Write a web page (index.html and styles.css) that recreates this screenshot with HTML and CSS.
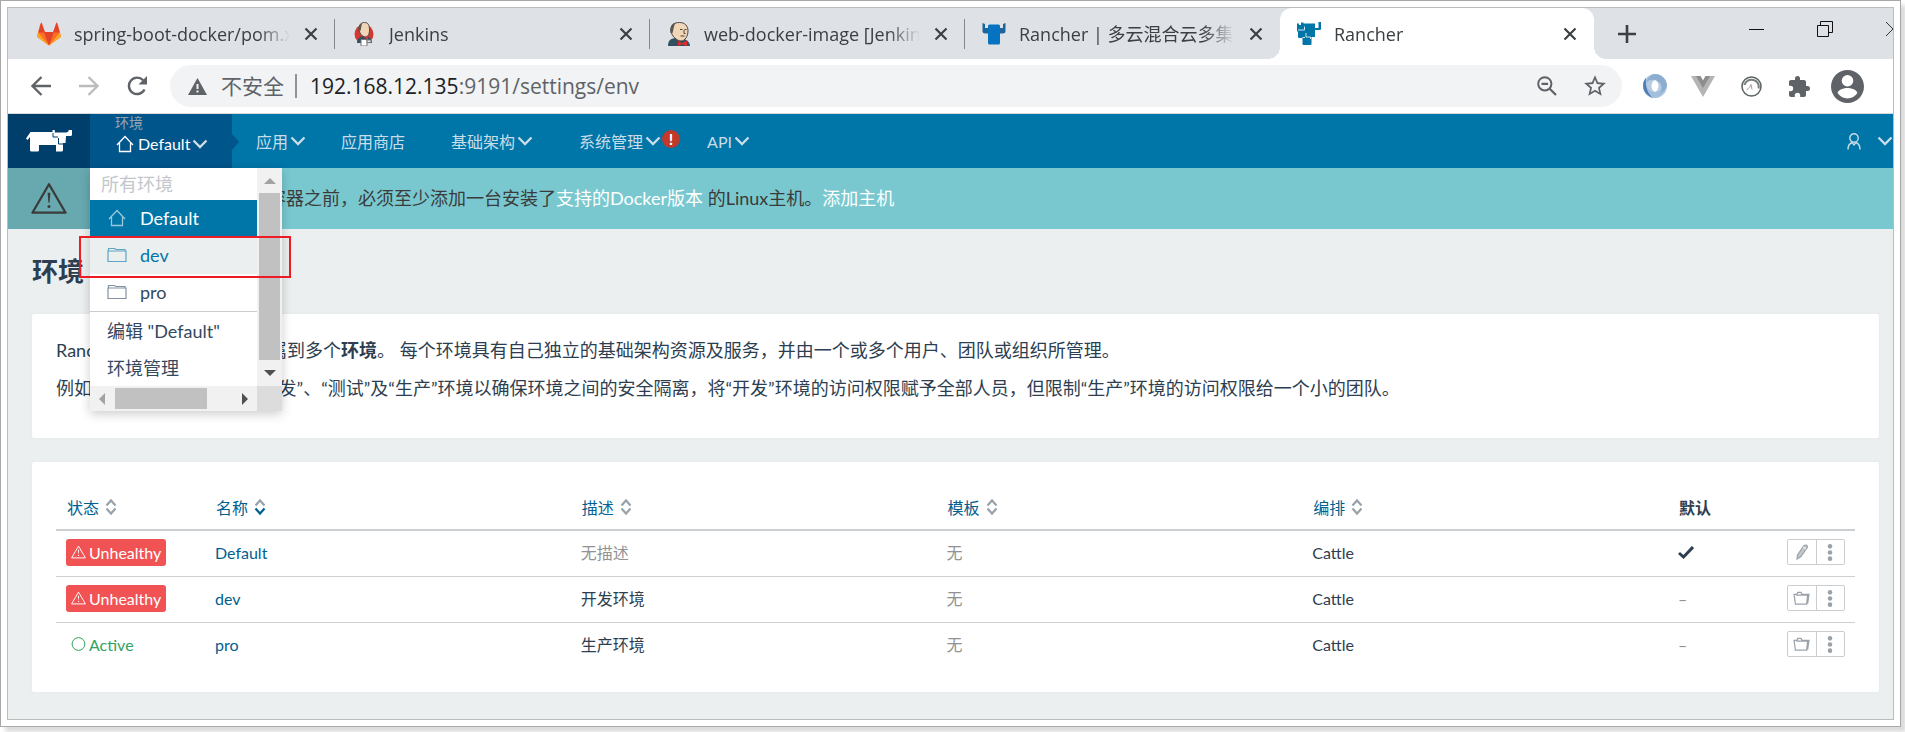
FILE: index.html
```html
<!DOCTYPE html>
<html lang="zh-CN">
<head>
<meta charset="utf-8">
<title>Rancher</title>
<link rel="stylesheet" href="styles.css">
</head>
<body>
<svg class="defs" aria-hidden="true">
  <symbol id="chev" viewBox="0 0 16 16"><path d="M1.500 4.500l6.500 6.500 6.500-6.500" fill="none" stroke="currentColor" stroke-width="2.300"/></symbol>
  <symbol id="close" viewBox="0 0 14 14"><path d="M1.500 1.500l11 11M12.500 1.500l-11 11" fill="none" stroke="currentColor" stroke-width="2.200"/></symbol>
  <symbol id="home" viewBox="0 0 18 18"><path d="M1 10L9 1.500 17 10M3.500 8v8.500h11V8" fill="none" stroke="currentColor" stroke-width="1.300"/></symbol>
  <symbol id="folder" viewBox="0 0 20 16"><path d="M1 4h18v10.500H1zM1.500 4V1.500h6L9 2.500h9V4" fill="none" stroke="currentColor" stroke-width="1.200"/></symbol>
  <symbol id="folder-open" viewBox="0 0 18 16"><path d="M3.500 4.500h12l-1 9.500H2.500L1 3.500h3l1-2h3.500l1 2H17l-1.500 10" fill="none" stroke="currentColor" stroke-width="1.300"/></symbol>
  <symbol id="warn" viewBox="0 0 38 34"><path d="M19 2L36.500 32h-35z" fill="none" stroke="currentColor" stroke-width="2.400" stroke-linejoin="round"/><path d="M17.500 11h3l-.9 10.500h-1.200z" fill="currentColor"/><circle cx="19" cy="25.500" r="1.600" fill="currentColor"/></symbol>
  <symbol id="sort" viewBox="0 0 12 18"><path d="M1.500 7.500L6 2.500l4.500 5" fill="none" stroke="#9aa2a9" stroke-width="2.200"/><path d="M1.500 10.500l4.500 5 4.500-5" fill="none" stroke="currentColor" stroke-width="2.200"/></symbol>
  <symbol id="dots" viewBox="0 0 6 18"><g fill="currentColor"><circle cx="3" cy="2.500" r="2.400"/><circle cx="3" cy="9" r="2.400"/><circle cx="3" cy="15.500" r="2.400"/></g></symbol>
</svg>

<div class="frame">
<div class="window">

<header class="tabstrip">
  <div class="tab">
    <svg class="favicon" viewBox="0 0 24 24"><path fill="#fc6d26" d="M12 23.500L0 14.500 3.500 1 8 10h8l4.500-9L24 14.500z"/><path fill="#e24329" d="M12 23.500L7 10h10zM1.300 10.500L4.500 0 8 10.500zM22.700 10.500L19.500 0 16 10.500z"/><path fill="#fca326" d="M12 23.500L0 15l1.300-4.500zM12 23.500L24 15l-1.300-4.500z"/></svg>
    <span class="tab-title">spring-boot-docker/pom.xml</span>
    <button class="tab-close" aria-label="关闭"><svg><use href="#close"/></svg></button>
  </div>
  <div class="tab">
    <svg class="favicon favicon-narrow" viewBox="2 0 20 24"><ellipse cx="12" cy="12" rx="9.500" ry="9.500" fill="#d33833"/><path d="M5 21c0-4 3-7 7-7s8 2 8 7z" fill="#335061"/><path d="M7 7c0-4 2-6.500 5.500-6.500S17.500 3 17.500 8s-2 7-4.500 7-6-4-6-8z" fill="#f0d6b7" stroke="#4b4540"/><path d="M6.500 8C6 4 8 1.500 10 1L8.500 9z" fill="#5c5650"/><path d="M12 15l4 3v-4z" fill="#d33833"/><path d="M9 17.500h6V24H9z" fill="#fff" stroke="#777"/><path d="M15 18h4v2.500h-4z" fill="#e6e6e6" stroke="#777"/></svg>
    <span class="tab-title">Jenkins</span>
    <button class="tab-close" aria-label="关闭"><svg><use href="#close"/></svg></button>
  </div>
  <div class="tab">
    <svg class="favicon" viewBox="0 0 24 24"><path d="M1 24c0-6 3-8 9-8s13 2 13 8z" fill="#335061"/><path d="M4 8c0-5 3-7.500 8.500-7.500S21 4 21 9s-3 10-7 10S4 14 4 8z" fill="#f0d6b7" stroke="#4b4540"/><path d="M3.500 11C2.500 5 5 1 9 .8 6.500 3 7 7 5.500 11z" fill="#5c5650"/><path d="M13 7.500h2.500M17.500 7.500h2M13.500 14h4M17 8v3.500h1.500" stroke="#4b4540" fill="none"/><path d="M11 19l4 2.200 5-2.700v5.500l-5-1.800-4 1.800z" fill="#e02c2c"/></svg>
    <span class="tab-title">web-docker-image [Jenkins]</span>
    <button class="tab-close" aria-label="关闭"><svg><use href="#close"/></svg></button>
  </div>
  <div class="tab">
    <svg class="favicon" viewBox="0 0 24 24"><path d="M.5 1l2.500 1v4h18V2l2.500-1V9q0 2.500-3 2.500H3.500Q.5 11.500.5 9z" fill="#1b659b"/><path d="M6 4q0-1.500 1.500-1.500h9Q18 2.500 18 4v17q0 1.500-1.500 1.500h-9Q6 22.500 6 21z" fill="#0573c1"/></svg>
    <span class="tab-title">Rancher | 多云混合云多集群管理</span>
    <button class="tab-close" aria-label="关闭"><svg><use href="#close"/></svg></button>
  </div>
  <div class="tab tab-active">
    <svg class="favicon" viewBox="0 0 24 24"><path d="M0 1.500h2V3h2V.5h2.500v1H18V6h3.500V0H24v7q0 1-1 1h-5v7h-3.500v7q0 1-1 1H6.500q-1 0-1-1v-6H2q-1 0-1-1V9.500H0z" fill="#0075a8"/><path d="M1 8h6.500V4.500M5.500 15.500H8M9 11v4h4.500v2" fill="none" stroke="#cfe5ef" stroke-width="1"/></svg>
    <span class="tab-title">Rancher</span>
    <button class="tab-close" aria-label="关闭"><svg><use href="#close"/></svg></button>
  </div>
  <button class="new-tab" aria-label="新标签页"><svg viewBox="0 0 18 18"><path d="M9 0v18M0 9h18" stroke="#3c4043" stroke-width="2.600"/></svg></button>
  <div class="win-controls">
    <button aria-label="最小化"><svg viewBox="0 0 16 16"><path d="M0 8.500h15" stroke="#111"/></svg></button>
    <button aria-label="还原"><svg viewBox="0 0 16 16"><path d="M.5 4.500h11v11H.5zM3.500 4.500v-4h12v11h-4" fill="none" stroke="#111"/></svg></button>
    <button aria-label="关闭窗口"><svg viewBox="0 0 16 16"><path d="M1 1l14 14M15 1L1 15" stroke="#333"/></svg></button>
  </div>
</header>

<div class="toolbar">
  <div class="nav-buttons">
    <button aria-label="后退"><svg viewBox="0 0 20 20"><path d="M20 10H2M10.500 1L1.500 10l9 9" fill="none" stroke="#5f6368" stroke-width="2.300"/></svg></button>
    <button aria-label="前进"><svg viewBox="0 0 20 20"><path d="M0 10h18M9.500 1l9 9-9 9" fill="none" stroke="#babcbe" stroke-width="2.300"/></svg></button>
    <button aria-label="重新加载"><svg viewBox="0 0 20 20"><path d="M17.500 13.500a8.200 8.200 0 1 1-1.300-9.200" fill="none" stroke="#5f6368" stroke-width="2.400"/><path d="M20 0v8.500h-8.500z" fill="#5f6368"/></svg></button>
  </div>
  <div class="omnibox">
    <svg class="insecure" viewBox="0 0 19 17"><path d="M9.500 0L19 17H0z" fill="#5f6368"/><path d="M9.500 6v5M9.500 12.500v2" stroke="#f1f3f4" stroke-width="2"/></svg>
    <span class="insecure-label">不安全</span>
    <span class="url"><b>192.168.12.135</b>:9191/settings/env</span>
    <button class="tool" aria-label="缩放"><svg viewBox="0 0 20 20" width="20" height="20"><circle cx="7.800" cy="7.800" r="6.600" fill="none" stroke="#5f6368" stroke-width="2"/><path d="M12.500 12.500L19 19M4.500 7.800h6.600" stroke="#5f6368" stroke-width="2.200"/></svg></button>
    <button class="tool" aria-label="收藏"><svg viewBox="0 0 24 24" width="26" height="26"><path d="M22 9.240l-7.190-.62L12 2 9.190 8.630 2 9.240l5.460 4.730L5.820 21 12 17.270 18.180 21l-1.630-7.030L22 9.240zM12 15.400l-3.760 2.270 1-4.280-3.320-2.880 4.380-.38L12 6.100l1.710 4.040 4.380.38-3.320 2.880 1 4.280L12 15.400z" fill="#5f6368"/></svg></button>
  </div>
  <button class="tool" aria-label="扩展 1"><svg viewBox="0 0 24 24" width="24" height="24"><circle cx="12" cy="12" r="12" fill="#b4cbe4"/><path d="M12 24A12 12 0 0 1 3 4c-1 9 3 14 9 14 5 0 8-3 8-8 2 8-2 14-8 14z" fill="#a3bfdd"/><path d="M3 4C0 7-1 13 2 18c2 3 5 5 8 6-5-4-8-11-7-20z" fill="#4d7db3"/><path d="M12 0c7 0 12 6 12 12-2 5-4 6-7 8 3-6 2-12-5-14-4-1-7 0-9 3C4 4 8 0 12 0z" fill="#8cacd0"/><ellipse cx="12" cy="12" rx="3.500" ry="5.800" fill="#fff"/></svg></button>
  <button class="tool" aria-label="扩展 2"><svg viewBox="0 0 24 21" width="24" height="21"><path d="M0 0h9l3 5 3-5h9L12 21z" fill="#b4b4b4"/><path d="M5 0h4.500L12 4.500 14.500 0H19l-7 12z" fill="#8d8d8d"/></svg></button>
  <button class="tool" aria-label="扩展 3"><svg viewBox="0 0 21 21" width="21" height="21"><circle cx="10.500" cy="10.500" r="9.500" fill="#fff" stroke="#5c6663" stroke-width="1.600"/><path d="M3.500 9c1-4 5-6 9-5 4 .8 6 5 5 8.500" fill="none" stroke="#777f7c" stroke-width="2"/><path d="M5.500 14c2-1.500 3.500-3 4.500-5.500l1 5" fill="none" stroke="#9aa09e"/></svg></button>
  <button class="tool" aria-label="扩展程序"><svg viewBox="1 0 23 23" width="23" height="23"><path d="M20.500 11H19V7c0-1.100-.9-2-2-2h-4V3.500a2.500 2.500 0 0 0-5 0V5H4c-1.100 0-2 .9-2 2v3.800h1.500a2.700 2.700 0 0 1 0 5.400H2V20c0 1.100.9 2 2 2h3.800v-1.500a2.700 2.700 0 0 1 5.400 0V22H17c1.100 0 2-.9 2-2v-4h1.500a2.500 2.500 0 0 0 0-5z" fill="#5f6368"/></svg></button>
  <button class="tool" aria-label="用户"><svg viewBox="2 2 20 20" width="33" height="33"><path d="M12 2a10 10 0 1 0 0 20 10 10 0 0 0 0-20zm0 3a3.500 3.500 0 1 1 0 7 3.500 3.500 0 0 1 0-7zm0 14.200a7.200 7.200 0 0 1-6-3.220c.03-1.990 4-3.080 6-3.080s5.970 1.090 6 3.080a7.200 7.200 0 0 1-6 3.220z" fill="#5f6368"/></svg></button>
</div>

<div class="app">
<nav class="topnav">
  <a class="brand" href="#" aria-label="Rancher"><svg viewBox="0 0 46 22" width="46" height="22"><path d="M4.500 2h22V0h2.300v2.500h11.500l2.200-1V0H46v4.500q0 1.500-1.500 1.500H40l-.5 7h-2.500v7q0 1.500-1.500 1.500H30V15H13v5q0 1.500-1.500 1.500h-6Q4 21.500 4 20V7L1.500 10 0 8.500z" fill="#fff"/><path d="M27 3v4h5M32.500 8v6h5" fill="none" stroke="#003f6b" stroke-width="1"/></svg></a>
  <div class="env">
    <button class="env-button">
      <span class="env-label">环境</span>
      <span class="env-current"><svg class="env-home"><use href="#home"/></svg>Default<svg class="chev"><use href="#chev"/></svg></span>
    </button>
    <div class="menu">
      <div class="menu-items">
        <div class="menu-heading">所有环境</div>
        <a class="menu-item menu-item-active" href="#"><svg><use href="#home"/></svg>Default</a>
        <a class="menu-item menu-item-hover" href="#"><svg><use href="#folder"/></svg>dev</a>
        <a class="menu-item" href="#"><svg><use href="#folder"/></svg>pro</a>
        <a class="menu-item menu-item-rule" href="#">编辑 "Default"</a>
        <a class="menu-item" href="#">环境管理</a>
      </div>
      <div class="vbar"><i class="arrow-up"></i><i class="vthumb"></i><i class="arrow-down"></i></div>
      <div class="hbar"><i class="arrow-left"></i><i class="hthumb"></i><i class="arrow-right"></i></div>
      <div class="corner"></div>
      <div class="marker"></div>
    </div>
  </div>
  <div class="links">
    <a class="link link-tight" href="#">应用<svg class="chev"><use href="#chev"/></svg></a>
    <a class="link" href="#">应用商店</a>
    <a class="link" href="#">基础架构<svg class="chev"><use href="#chev"/></svg></a>
    <a class="link" href="#">系统管理<svg class="chev"><use href="#chev"/></svg><span class="alert-badge">!</span></a>
    <a class="link" href="#">API<svg class="chev"><use href="#chev"/></svg></a>
  </div>
  <button class="user" aria-label="用户菜单"><svg viewBox="0 0 14 17" width="14" height="17"><circle cx="7" cy="5" r="4.200" fill="none" stroke="currentColor" stroke-width="1.400"/><path d="M1 16.500c0-4 1.500-6 4-7l2 2.500 2-2.500c2.500 1 4 3 4 7" fill="none" stroke="currentColor" stroke-width="1.400"/></svg><svg class="chev"><use href="#chev"/></svg></button>
</nav>

<div class="banner">
  <div class="banner-icon"><svg width="36" height="33"><use href="#warn"/></svg></div>
  <p>在添加服务或启动容器之前，必须至少添加一台安装了<a href="#">支持的Docker版本</a> 的Linux主机。<a href="#">添加主机</a></p>
</div>

<main>
  <h1>环境</h1>
  <section class="panel intro">
    <p>Rancher 支持将资源分组归属到多个<b>环境</b>。 每个环境具有自己独立的基础架构资源及服务，并由一个或多个用户、团队或组织所管理。</p>
    <p>例如：您可以创建不同的“开发”、“测试”及“生产”环境以确保环境之间的安全隔离，将“开发”环境的访问权限赋予全部人员，但限制“生产”环境的访问权限给一个小的团队。</p>
  </section>
  <section class="panel">
    <table>
      <thead>
        <tr>
          <th class="col-state"><a href="#">状态<svg class="sort"><use href="#sort"/></svg></a></th>
          <th><a href="#">名称<svg class="sort sort-down"><use href="#sort"/></svg></a></th>
          <th><a href="#">描述<svg class="sort"><use href="#sort"/></svg></a></th>
          <th><a href="#">模板<svg class="sort"><use href="#sort"/></svg></a></th>
          <th><a href="#">编排<svg class="sort"><use href="#sort"/></svg></a></th>
          <th class="col-default">默认</th>
          <th class="col-actions"></th>
        </tr>
      </thead>
      <tbody>
        <tr>
          <td><span class="badge"><svg><use href="#warn"/></svg>Unhealthy</span></td>
          <td><a href="#">Default</a></td>
          <td class="muted">无描述</td>
          <td class="muted">无</td>
          <td>Cattle</td>
          <td><svg class="check" viewBox="0 0 16 13"><path d="M1 7l4.500 4L15 1" fill="none" stroke="currentColor" stroke-width="3"/></svg></td>
          <td><div class="actions"><button aria-label="编辑"><svg viewBox="0 0 16 16" width="16" height="16"><path d="M3 15l.5-4L10 1.500q3-1.500 3.500 1.500L7 12.500z" fill="#c3c7ca" stroke="currentColor" stroke-width="1.200"/><path d="M9 3l3 2" stroke="#fff"/></svg></button><button aria-label="更多"><svg width="6" height="17"><use href="#dots"/></svg></button></div></td>
        </tr>
        <tr>
          <td><span class="badge"><svg><use href="#warn"/></svg>Unhealthy</span></td>
          <td><a href="#">dev</a></td>
          <td>开发环境</td>
          <td class="muted">无</td>
          <td>Cattle</td>
          <td class="muted">–</td>
          <td><div class="actions"><button aria-label="切换"><svg width="17" height="15"><use href="#folder-open"/></svg></button><button aria-label="更多"><svg width="6" height="17"><use href="#dots"/></svg></button></div></td>
        </tr>
        <tr>
          <td><span class="badge badge-active"><svg viewBox="0 0 14 14"><circle cx="7" cy="7" r="6.400" fill="none" stroke="currentColor"/></svg>Active</span></td>
          <td><a href="#">pro</a></td>
          <td>生产环境</td>
          <td class="muted">无</td>
          <td>Cattle</td>
          <td class="muted">–</td>
          <td><div class="actions"><button aria-label="切换"><svg width="17" height="15"><use href="#folder-open"/></svg></button><button aria-label="更多"><svg width="6" height="17"><use href="#dots"/></svg></button></div></td>
        </tr>
      </tbody>
    </table>
  </section>
</main>
</div>
</div>
</div>
</body>
</html>
```
FILE: styles.css
```css
* { box-sizing: border-box; }
html, body { height: 100%; }
body {
  margin: 0;
  padding: 0 4px 5px 0;
  background: #fff;
  color: #2c3e50;
  font-family: Lato, "Noto Sans CJK SC", sans-serif;
  font-size: 16px;
}
a { color: inherit; text-decoration: none; }
button { margin: 0; padding: 0; border: 0; background: none; font: inherit; color: inherit; }
svg { flex: none; }
.defs { position: absolute; width: 0; height: 0; }

.frame {
  display: flex;
  min-height: 100%;
  padding: 6px;
  border: 1px solid #a8a8a8;
  box-shadow: 5px 5px 4px #dcdcdc;
}
.window {
  flex: 1;
  min-width: 0;
  display: flex;
  flex-direction: column;
  border: 1px solid #bcbcbc;
  background: #fff;
}

/* Browser tabs */
.tabstrip {
  display: flex;
  height: 51px;
  padding-left: 12px;
  overflow: hidden;
  background: #dee1e6;
  color: #3c4043;
  font-family: "Open Sans", "Noto Sans CJK SC", sans-serif;
  font-size: 18px;
}
.tab {
  position: relative;
  flex: 0 1 315px;
  min-width: 0;
  display: flex;
  align-items: center;
  padding: 0 17px;
}
.tab:not(.tab-active)::after {
  content: "";
  position: absolute;
  right: 0;
  top: 11px;
  width: 1px;
  height: 30px;
  background: #84888d;
}
.tab:nth-child(4)::after { display: none; }
.favicon { width: 24px; height: 24px; margin-right: 13px; }
.favicon-narrow { width: 20px; margin: 0 15px 0 2px; }
.tab-title {
  flex: 1;
  min-width: 0;
  overflow: hidden;
  white-space: nowrap;
  line-height: 32px;
  margin-right: 14px;
  -webkit-mask-image: linear-gradient(to left, transparent, #000 32px);
  mask-image: linear-gradient(to left, transparent, #000 32px);
}
.tab-close { display: flex; }
.tab-close svg { width: 14px; height: 14px; }
.tab-active { background: #fff; border-radius: 12px 12px 0 0; flex-basis: 314px; }
.tab-active::before, .tab-active::after {
  content: "";
  position: absolute;
  bottom: 0;
  width: 12px;
  height: 12px;
}
.tab-active::before { left: -12px; background: radial-gradient(circle at 0 0, transparent 12px, #fff 12px); }
.tab-active::after { right: -12px; background: radial-gradient(circle at 100% 0, transparent 12px, #fff 12px); }
.new-tab { width: 66px; display: flex; align-items: center; justify-content: center; }
.new-tab svg { width: 18px; height: 18px; }
.win-controls { display: flex; height: 42px; margin-left: auto; margin-right: -34px; }
.win-controls button { width: 68px; display: flex; align-items: center; justify-content: center; }
.win-controls svg { width: 16px; height: 16px; }

/* Address bar */
.toolbar {
  display: flex;
  align-items: center;
  height: 55px;
  padding: 0 22px 0 9px;
  border-bottom: 1px solid #d8dadc;
}
.nav-buttons { display: flex; }
.nav-buttons button { width: 48px; display: flex; justify-content: center; }
.nav-buttons svg { width: 20px; height: 20px; }
.omnibox {
  flex: 1;
  display: flex;
  align-items: center;
  height: 42px;
  margin: 0 9px;
  padding: 0 3px 0 18px;
  border-radius: 21px;
  background: #f1f3f4;
  color: #5f6368;
  font-family: "Open Sans", "Noto Sans CJK SC", sans-serif;
  font-size: 21px;
}
.insecure { width: 19px; height: 17px; margin-right: 14px; }
.insecure-label { line-height: 24px; padding-right: 11px; border-right: 2px solid #909498; }
.url { flex: 1; padding-left: 13px; }
.url b { font-weight: 400; color: #202124; }
.tool { width: 48px; display: flex; align-items: center; justify-content: center; }

/* Application header */
.app { flex: 1; background: #ebeff0; }
.topnav { display: flex; height: 54px; background: #0075a8; color: #c9dde8; }
.chev { width: 16px; height: 16px; }
.brand { width: 82px; display: flex; align-items: center; justify-content: center; background: #003f6b; }
.env { position: relative; width: 142px; background: #00558b; }
.env::after {
  content: "";
  position: absolute;
  right: -7px;
  top: 20px;
  border-left: 7px solid #00558b;
  border-top: 8px solid transparent;
  border-bottom: 8px solid transparent;
}
.env-button { display: block; width: 100%; height: 100%; padding: 0 25px 12px; text-align: left; }
.env-label { display: block; font-size: 14px; line-height: 18px; color: #99a3ad; }
.env-current { display: flex; align-items: center; line-height: 24px; color: #fff; white-space: nowrap; }
.env-home { width: 18px; height: 18px; margin: 0 4px 0 1px; }
.env-current .chev { margin-left: 2px; color: #d3dee6; }
.links { display: flex; align-items: center; gap: 46px; padding-left: 24px; }
.link { position: relative; display: flex; align-items: center; gap: 2px; }
.link-tight { margin-right: -11px; }
.alert-badge {
  position: absolute;
  top: 1px;
  right: -19px;
  width: 18px;
  height: 18px;
  border-radius: 9px;
  background: #c0392b;
  color: #fff;
  font-weight: 700;
  line-height: 18px;
  text-align: center;
}
.user { display: flex; align-items: center; gap: 16px; margin-left: auto; }

/* Environment menu */
.menu {
  position: absolute;
  z-index: 2;
  top: 54px;
  left: 0;
  display: grid;
  grid-template-columns: 167px 25px;
  grid-template-rows: auto 25px;
  background: #fff;
  color: #34495e;
  font-size: 18px;
  box-shadow: 0 3px 10px rgba(0, 0, 0, .2);
}
.menu-heading { height: 32px; padding-left: 11px; line-height: 32px; color: #c3c7cc; }
.menu-item { display: flex; align-items: center; height: 37px; padding: 0 0 2px 17px; }
.menu-item svg { width: 20px; height: 18px; margin-right: 13px; opacity: .6; }
.menu-item-active { background: #0075a8; color: #fff; }
.menu-item-hover { background: #ebeff0; color: #0075a8; }
.menu-item-rule { height: 38px; border-top: 1px solid #c9cdd0; }
.vbar, .hbar { display: flex; align-items: center; justify-content: space-between; background: #f1f1f1; }
.vbar { flex-direction: column; padding: 10px 0; }
.hbar { padding: 0 9px; }
.vthumb { flex: 1; width: 21px; margin: 9px 0 10px; background: #c1c1c1; }
.hthumb { width: 92px; height: 21px; margin-right: 25px; background: #c1c1c1; }
.arrow-up, .arrow-down { border: 6px solid transparent; }
.arrow-up { border-top: 0; border-bottom-color: #a3a3a3; }
.arrow-down { border-bottom: 0; border-top-color: #505050; }
.arrow-left, .arrow-right { border: 6px solid transparent; }
.arrow-left { border-left: 0; border-right-color: #a3a3a3; }
.arrow-right { border-right: 0; border-left-color: #505050; }
.corner { background: #dcdcdc; }
.marker {
  position: absolute;
  top: 68px;
  left: -11px;
  right: -9px;
  height: 42px;
  border: 2px solid #ed1c24;
}

/* Notice */
.banner { display: flex; align-items: stretch; height: 61px; background: #79c8cf; color: #3b3b3b; font-size: 18px; }
.banner-icon { width: 82px; display: flex; align-items: center; justify-content: center; background: #67a9af; }
.banner p { margin: 0; padding-left: 34px; line-height: 61px; }
.banner a { color: #fff; }

/* Content */
main { padding: 0 14px 27px 24px; }
h1 { margin: 0; padding: 24px 0; font-size: 26px; line-height: 37px; font-weight: 700; }
.panel { padding: 24px; background: #fff; border-radius: 2px; box-shadow: 0 0 2px #dfe3e5; }
.panel + .panel { margin-top: 24px; }
.intro { height: 124px; padding-top: 17px; font-size: 18px; }
.intro p { margin: 0; line-height: 38px; }

table { width: 100%; table-layout: fixed; border-collapse: collapse; }
th { height: 44px; padding: 0 0 2px 11px; text-align: left; border-bottom: 2px solid #cdd0d2; }
td { height: 46px; padding: 0 0 2px 10px; border-bottom: 1px solid #cdd0d2; }
tbody tr:last-child td { border-bottom: 0; }
th a { display: flex; align-items: center; gap: 6px; color: #00608f; font-weight: 400; }
td a { color: #00608f; }
.col-state { width: 149px; }
.col-default { width: 110px; }
.col-actions { width: 77px; }
.sort { width: 12px; height: 18px; color: #9aa2a9; }
.sort-down { color: #00608f; }
.muted { color: #929292; }
.badge {
  display: inline-flex;
  align-items: center;
  gap: 3px;
  height: 27px;
  padding: 0 5px;
  border-radius: 3px;
  background: #f15354;
  color: #fff;
  vertical-align: middle;
}
.badge svg { width: 15px; height: 14px; }
.badge-active { background: none; color: #31a35f; }
.check { display: block; width: 16px; height: 13px; }
.actions { display: flex; width: 58px; height: 26px; margin-left: -1px; border: 1px solid #c9cdd0; border-radius: 2px; color: #9aa2a9; }
.actions button { flex: 1; display: flex; align-items: center; justify-content: center; }
.actions button + button { border-left: 1px solid #c9cdd0; }
```
